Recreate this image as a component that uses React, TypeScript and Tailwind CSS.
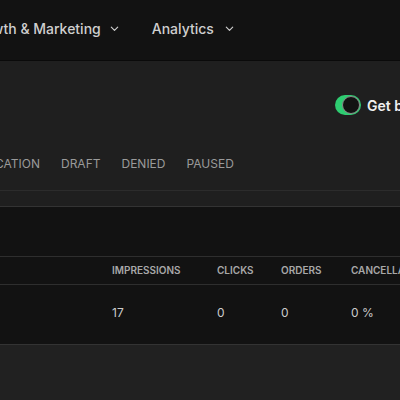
import React from "react";

function Chevron() {
  return (
    <svg width="11" height="11" viewBox="0 0 24 24" fill="none" stroke="currentColor" strokeWidth="2.5" strokeLinecap="round" strokeLinejoin="round">
      <path d="M5 9l7 7 7-7" />
    </svg>
  );
}

export default function App() {
  return (
    <div className="w-[400px] h-[400px] overflow-hidden bg-[#212121] text-[#d0d0d0]" style={{ fontFamily: "Inter, 'Noto Sans', sans-serif" }}>
      {/* top nav */}
      <div className="h-[61px] bg-[#121212] border-b border-[#0a0a0a] flex items-center pb-[4px]">
        <div className="flex items-center gap-[32px] ml-[-32px] text-[14px] font-medium text-[#cfcfcf] whitespace-nowrap">
          <div className="flex items-center gap-[8px]">
            <span>Growth &amp; Marketing</span>
            <Chevron />
          </div>
          <div className="flex items-center gap-[10px]">
            <span>Analytics</span>
            <Chevron />
          </div>
        </div>
      </div>
      {/* header section */}
      <div className="bg-[#1f1f1f]">
        <div className="h-[84px] flex items-center pl-[335px] pt-[4px] overflow-hidden">
          <div className="flex items-center gap-[6px] whitespace-nowrap">
            <div className="w-[26px] h-[20px] shrink-0 rounded-full bg-[#2ecc71] flex items-center justify-end pr-[1px]">
              <div className="w-[18px] h-[18px] rounded-full bg-[#121212] border border-[#8a8a8a]" />
            </div>
            <span className="text-[14px] font-semibold text-[#f0f0f0]">Get best results</span>
          </div>
        </div>
        <div className="h-[46px] flex items-start pt-[11px] border-b border-[#2c2c2c] overflow-hidden">
          <div className="flex items-center gap-[21px] ml-[-5px] text-[12px] leading-[16px] text-[#9a9a9a] whitespace-nowrap">
            <span>CATION</span>
            <span>DRAFT</span>
            <span>DENIED</span>
            <span>PAUSED</span>
          </div>
        </div>
        <div className="h-[16px] border-b border-[#333333]" />
      </div>
      {/* table */}
      <div className="bg-[#121212]">
        <div className="h-[50px] border-b border-[#2e2e2e]" />
        <div className="h-[28px] grid grid-cols-[112px_105px_64px_70px_1fr] items-center border-b border-[#2e2e2e] text-[10px] font-semibold text-[#a8a8a8] whitespace-nowrap overflow-hidden">
          <span />
          <span>IMPRESSIONS</span>
          <span>CLICKS</span>
          <span>ORDERS</span>
          <span>CANCELLATIONS</span>
        </div>
        <div className="h-[60px] grid grid-cols-[112px_105px_64px_70px_1fr] items-center pb-[3px] border-b border-[#333333] text-[12px] text-[#cccccc] whitespace-nowrap">
          <span />
          <span>17</span>
          <span>0</span>
          <span>0</span>
          <span>0 %</span>
        </div>
      </div>
    </div>
  );
}
